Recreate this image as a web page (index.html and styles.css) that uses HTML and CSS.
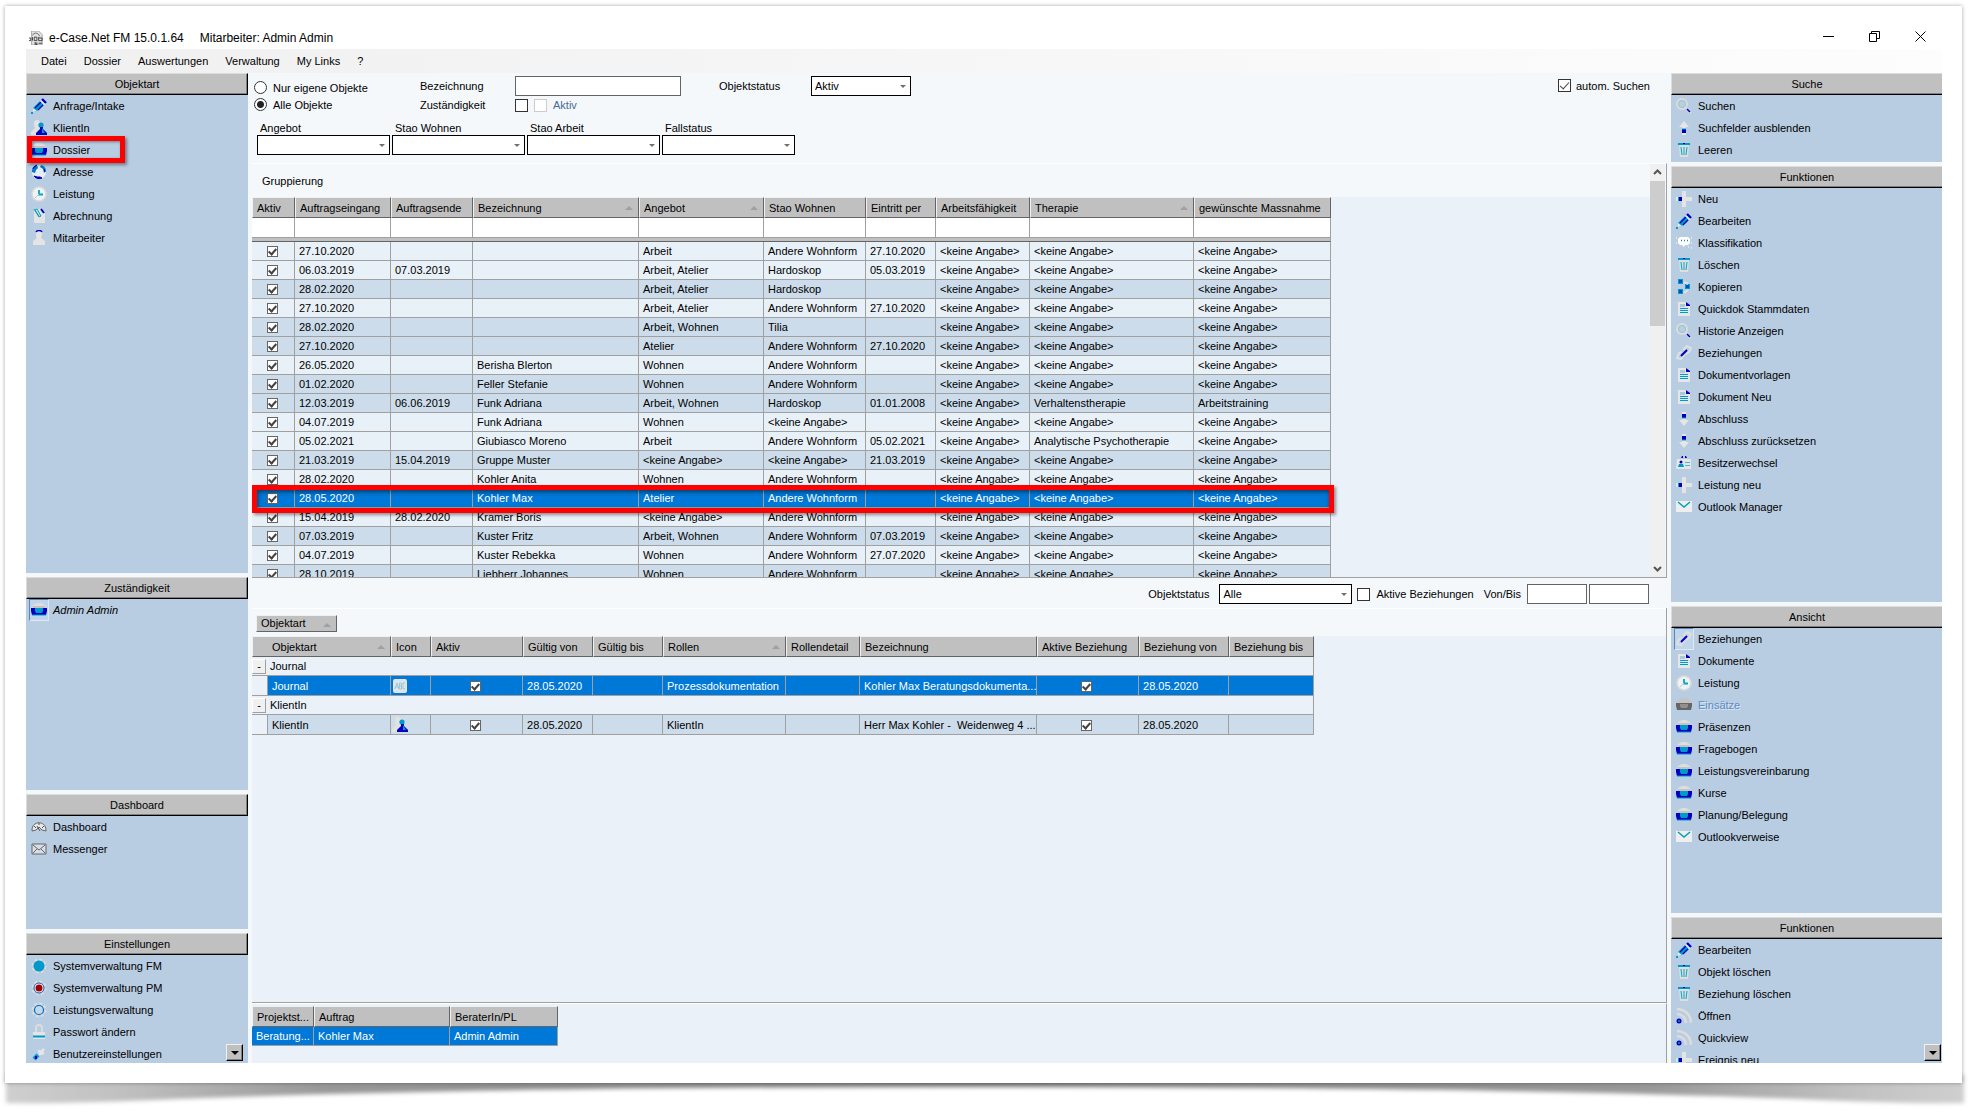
FILE: index.html
```html
<!DOCTYPE html>
<html lang="de">
<head>
    <meta charset="UTF-8">
    <meta name="viewport" content="width=device-width, initial-scale=1.0">
    <title>e-Case.Net FM 15.0.1.64</title>
    <link rel="stylesheet" href="styles.css">
</head>
<body>
    <!-- Icon set -->
    <svg class="sprite" aria-hidden="true">
        <symbol id="i-pencil" viewBox="0 0 16 16">
            <path d="M2 10 9 3l4 4-7 6-4 1z" fill="#0099cc"/>
            <path d="M4 10l6-6M7 12l5-5" stroke="#0000b8" stroke-width="1.2"/>
            <path d="M9 3l2-1 4 4-2 1z" fill="#f0f0f0"/>
            <path d="M11 1l4 4" stroke="#0000c0" stroke-width="2.4"/>
            <path d="M2 10l4 3-4 1z" fill="#e8e8e8"/>
            <path d="M0 14h2v2H0z" fill="#0099cc"/>
        </symbol>
        <symbol id="i-client" viewBox="0 0 16 16">
            <path d="M3 3c0-4 6-4 6 0 0 2-1 3-1 4l1 2-1 6H0v-3l4-4C3 6 3 5 3 3z" fill="#e2e2e2"/>
            <circle cx="10" cy="5" r="2.6" fill="#0099cc"/>
            <path d="M9 7h3v2l4 4v2H5v-2l4-4z" fill="#0000c0"/>
            <path d="M11 8l3 5h-3z" fill="#0099cc"/>
        </symbol>
        <symbol id="i-tray" viewBox="0 0 16 16">
            <path d="M2 3l4-2h4l4 2 1 4H1z" fill="#dedede"/>
            <path d="M2 5h12" stroke="#aaa"/>
            <path d="M0 6h16v3l-1 4H1L0 9z" fill="#0000c0"/>
            <path d="M4 6h8v3l-1 2H5L4 9z" fill="#0099cc"/>
            <path d="M1 13h14" stroke="#0099cc"/>
        </symbol>
        <symbol id="i-tray-off" viewBox="0 0 16 16">
            <path d="M2 3l4-2h4l4 2 1 4H1z" fill="#c4c4c4"/>
            <path d="M0 6h16v3l-1 4H1L0 9z" fill="#666"/>
            <path d="M4 7h8v2l-1 2H5L4 9z" fill="#909090"/>
        </symbol>
        <symbol id="i-globe" viewBox="0 0 16 16">
            <circle cx="8" cy="8" r="7" fill="#e8eef4"/>
            <path d="M6 1C2 2 1 5 1 8l3 1 1-3 2-2zM10 1c4 1 5 4 5 6l-2 2-1-4-3-2z" fill="#0077c8"/>
            <path d="M6 1C4 2 2 3 2 5M13 5l1 3M3 12c2 3 6 3 8 2l-2-1H6z" stroke="#0000b0" fill="#0000b0"/>
        </symbol>
        <symbol id="i-clock" viewBox="0 0 16 16">
            <circle cx="8" cy="8" r="7" fill="#f2f2f2" stroke="#d8d8d8" stroke-width="2" stroke-dasharray="2 1"/>
            <path d="M8 4v4.500h4" stroke="#00a8c0" stroke-width="1.800" fill="none"/>
            <path d="M8 8l-4 4" stroke="#b8cce4"/>
        </symbol>
        <symbol id="i-clip" viewBox="0 0 16 16">
            <path d="M3 1h8l3 3v11H3z" fill="#e4e4e4"/>
            <path d="M10 1l3 4" stroke="#0000c0" stroke-width="2"/>
            <path d="M3 1l5 8 2-1-4-7-2 1 4 6" stroke="#00a0c0" fill="none"/>
        </symbol>
        <symbol id="i-staff" viewBox="0 0 16 16">
            <path d="M5 4c0-5 6-5 6 0 0 2-1 3-1 4l4 3v4H2v-4l4-3C5 7 5 6 5 4z" fill="#e4e4e4"/>
            <path d="M5 2c1-2 5-2 6 0" stroke="#0000c0" stroke-width="1.500" fill="none"/>
        </symbol>
        <symbol id="i-search" viewBox="0 0 16 16">
            <circle cx="6" cy="6" r="5" fill="none" stroke="#dcdcdc" stroke-width="2"/>
            <circle cx="6" cy="6" r="3.500" fill="#b8d0e4" stroke="#98c8cc"/>
            <path d="M10 10l5 5" stroke="#dcdcdc" stroke-width="2.500"/>
            <path d="M11 11l3 3" stroke="#0000c0" stroke-width="1.600"/>
        </symbol>
        <symbol id="i-up" viewBox="0 0 16 16">
            <path d="M8 1l5 6h-3v8H6V7H3z" fill="#e6e6e6"/>
            <path d="M6 9h4v4H6z" fill="#0000b8"/>
            <path d="M6 9h4" stroke="#0099cc"/>
        </symbol>
        <symbol id="i-down" viewBox="0 0 16 16">
            <path d="M6 1h4v8h3l-5 6-5-6h3z" fill="#e6e6e6"/>
            <path d="M6 3h4v4H6z" fill="#0000b8"/>
            <path d="M6 7h4" stroke="#0099cc"/>
        </symbol>
        <symbol id="i-trash" viewBox="0 0 16 16">
            <path d="M3 3h10l-1 12H4z" fill="#dedede"/>
            <path d="M2 2h12" stroke="#0099cc" stroke-width="2"/>
            <path d="M7 1.500h2" stroke="#0000b8"/>
            <path d="M5 5l1 8M8 5v8M11 5l-1 8" stroke="#00a8c8"/>
        </symbol>
        <symbol id="i-plus" viewBox="0 0 16 16">
            <path d="M6 0h4v6h6v4h-6v6H6v-6H0V6h6z" fill="#e4e4e4"/>
            <path d="M2 6h4v4H2z" fill="#0000b8"/>
            <path d="M2.500 6v4" stroke="#0099cc"/>
        </symbol>
        <symbol id="i-cloud" viewBox="0 0 16 16">
            <path d="M4 2h8l2 2v4l-2 2H9l-1 2-2-2H4L2 8V4z" fill="#fff"/>
            <path d="M5 5.500h1M8 5.500h1M11 5.500h1" stroke="#008cb8" stroke-width="1.500"/>
            <path d="M0 3h1M0 8h1M15 3h1M15 8h1M12 12h1M15 13h1" stroke="#fff"/>
        </symbol>
        <symbol id="i-copy" viewBox="0 0 16 16">
            <path d="M2 0h5v5H2zM9 5h5v5H9zM2 10h5v5H2z" fill="#0099cc"/>
            <path d="M3 1h3v3H3zM10 6h3v3h-3zM3 11h3v3H3z" fill="#0050b8"/>
            <path d="M8 3l4 2M8 14l4-3" stroke="#e0e0e0" stroke-width="2"/>
        </symbol>
        <symbol id="i-doc" viewBox="0 0 16 16">
            <path d="M2 1h8l4 4v10H2z" fill="#e6e6e6"/>
            <path d="M4 3h5v3H4z" fill="#a8c8e4"/>
            <path d="M10 1l4 3v1h-4z" fill="#0000b8"/>
            <path d="M4 7.500h8M4 9.500h8M4 11.500h8" stroke="#0099cc"/>
        </symbol>
        <symbol id="i-link" viewBox="0 0 16 16">
            <path d="M7 5l4-4 4 2-2 4-3 2M9 9l-4 5-4-1 2-5 3-1" stroke="#e0e0e0" stroke-width="2" fill="none"/>
            <path d="M5 11l6-6" stroke="#0000c0" stroke-width="2"/>
        </symbol>
        <symbol id="i-card" viewBox="0 0 16 16">
            <path d="M1 4h14v10H0z" fill="#e6e6e6"/>
            <path d="M5 3l1-2h1v2h2V1h1l1 2z" fill="#0000b8"/>
            <circle cx="5" cy="7" r="1.500" fill="#0000b8"/>
            <path d="M2 12l1-3h4l1 3z" fill="#0099cc"/>
            <path d="M9 7.500h5M9 10.500h5" stroke="#48b8cc"/>
        </symbol>
        <symbol id="i-mail" viewBox="0 0 16 16">
            <path d="M0 2h16v11H0z" fill="#eee"/>
            <path d="M2 3l6 5 6-5" stroke="#00a0b8" stroke-width="1.500" fill="none"/>
        </symbol>
        <symbol id="i-gauge" viewBox="0 0 16 16">
            <path d="M1 12C0 1 16 1 15 12l-4-1-3-3-3 3z" fill="#e8e8e8" stroke="#666"/>
            <path d="M3 7l2 2M8 4v2M13 7l-2 2M6 7l3 5" stroke="#555"/>
        </symbol>
        <symbol id="i-envelope" viewBox="0 0 16 16">
            <path d="M1 3h14v10H1z" fill="#d8dee6" stroke="#666"/>
            <path d="M2 4l6 5 6-5M2 12l4-4M14 12l-4-4" stroke="#666" fill="none"/>
        </symbol>
        <symbol id="i-gear-blue" viewBox="0 0 16 16">
            <circle cx="8" cy="8" r="6.500" fill="none" stroke="#dcdcdc" stroke-width="2" stroke-dasharray="3 2"/>
            <circle cx="8" cy="8" r="5.500" fill="#0099cc"/>
        </symbol>
        <symbol id="i-gear-red" viewBox="0 0 16 16">
            <circle cx="8" cy="8" r="6.500" fill="none" stroke="#dcdcdc" stroke-width="2" stroke-dasharray="3 2"/>
            <circle cx="8" cy="8" r="5" fill="#fff" stroke="#1858a8"/>
            <circle cx="8" cy="8" r="3.500" fill="#a00000"/>
        </symbol>
        <symbol id="i-gear" viewBox="0 0 16 16">
            <circle cx="8" cy="8" r="6.500" fill="none" stroke="#dcdcdc" stroke-width="2" stroke-dasharray="3 2"/>
            <circle cx="8" cy="8" r="4.500" fill="#c4d8ea" stroke="#0070c0" stroke-width="1.200"/>
        </symbol>
        <symbol id="i-lock" viewBox="0 0 16 16">
            <path d="M5 8V4c0-4 6-4 6 0v4" stroke="#dcdcdc" stroke-width="2" fill="none"/>
            <path d="M2 8h12v7H2z" fill="#e4e4e4"/>
            <path d="M2 12.500h12" stroke="#0099cc" stroke-width="2"/>
        </symbol>
        <symbol id="i-wrench" viewBox="0 0 16 16">
            <path d="M8 8l5-5M8 4l1 4 4-1" stroke="#e6e6e6" stroke-width="2.500" fill="none"/>
            <path d="M3 13l4-4" stroke="#0099cc" stroke-width="4"/>
            <path d="M4 11.500h2" stroke="#0000b8" stroke-width="3"/>
        </symbol>
        <symbol id="i-feed" viewBox="0 0 16 16">
            <path d="M1 1c8 0 14 6 14 14M1 6c5 0 9 4 9 9" stroke="#dcdcdc" stroke-width="2.500" fill="none"/>
            <circle cx="3" cy="13" r="2.500" fill="#0000c0"/>
            <circle cx="3" cy="13" r="1" fill="#0099cc"/>
        </symbol>
        <symbol id="i-text" viewBox="0 0 16 16">
            <rect x="1" y="1" width="14" height="14" rx="2" fill="#dfe5ea"/>
            <path d="M3 11l2-6 2 6M3 9h3M7.500 5v6h2V5zM7.500 8h2M13 5h-2v6h2" stroke="#9cc8dc" fill="none"/>
        </symbol>
        <symbol id="i-app" viewBox="0 0 16 16">
            <path d="M3 0h8l4 4v12H3z" fill="#e4e4e4" stroke="#999"/>
            <path d="M4 5c2-4 7-3 8 1" stroke="#555" fill="none"/>
            <path d="M0 8h2v3H0M4 7v4M6 7h3v4H6zM11 7v4h4V8h-4M7 13v3M7 13l2 3v-3M11 14h4" stroke="#333" fill="none"/>
        </symbol>
    </svg>

    <div class="sheet">
        <!-- Title bar -->
        <header class="titlebar">
            <svg class="app-icon"><use href="#i-app"/></svg>
            <span class="app-name">e-Case.Net FM 15.0.1.64</span>
            <span>Mitarbeiter: Admin Admin</span>
            <div class="window-buttons">
                <button aria-label="Minimieren"><svg viewBox="0 0 11 11"><path d="M0 5.500h11" stroke="#000"/></svg></button>
                <button aria-label="Wiederherstellen"><svg viewBox="0 0 11 11"><path d="M.5 2.500h7v8h-7zM2.500 2V.5h8v7H8" stroke="#000" fill="none"/></svg></button>
                <button aria-label="Schliessen"><svg viewBox="0 0 11 11"><path d="M.5.500l10 10M10.500.500l-10 10" stroke="#000"/></svg></button>
            </div>
        </header>

        <nav class="menubar">
            <button>Datei</button>
            <button>Dossier</button>
            <button>Auswertungen</button>
            <button>Verwaltung</button>
            <button>My Links</button>
            <button>?</button>
        </nav>

        <div class="workspace">
            <!-- Navigation -->
            <aside class="sidebar sidebar-left">
                <section class="panel panel-objektart">
                    <h2>Objektart</h2>
                    <a href="#"><svg><use href="#i-pencil"/></svg>Anfrage/Intake</a>
                    <a href="#"><svg><use href="#i-client"/></svg>KlientIn</a>
                    <a href="#" class="marked"><svg><use href="#i-tray"/></svg>Dossier</a>
                    <a href="#"><svg><use href="#i-globe"/></svg>Adresse</a>
                    <a href="#"><svg><use href="#i-clock"/></svg>Leistung</a>
                    <a href="#"><svg><use href="#i-clip"/></svg>Abrechnung</a>
                    <a href="#"><svg><use href="#i-staff"/></svg>Mitarbeiter</a>
                </section>
                <section class="panel panel-zustaendigkeit">
                    <h2>Zuständigkeit</h2>
                    <a href="#" class="pressed own"><svg><use href="#i-tray"/></svg>Admin Admin</a>
                </section>
                <section class="panel panel-dashboard">
                    <h2>Dashboard</h2>
                    <a href="#"><svg><use href="#i-gauge"/></svg>Dashboard</a>
                    <a href="#"><svg><use href="#i-envelope"/></svg>Messenger</a>
                </section>
                <section class="panel panel-einstellungen">
                    <h2>Einstellungen</h2>
                    <a href="#"><svg><use href="#i-gear-blue"/></svg>Systemverwaltung FM</a>
                    <a href="#"><svg><use href="#i-gear-red"/></svg>Systemverwaltung PM</a>
                    <a href="#"><svg><use href="#i-gear"/></svg>Leistungsverwaltung</a>
                    <a href="#"><svg><use href="#i-lock"/></svg>Passwort ändern</a>
                    <a href="#"><svg><use href="#i-wrench"/></svg>Benutzereinstellungen</a>
                    <button class="scroll-more" aria-label="Weiter"></button>
                </section>
            </aside>

            <main>
                <!-- Search fields -->
                <form class="search">
                    <div class="search-row">
                        <div class="scope">
                            <label><input type="radio" name="scope">Nur eigene Objekte</label>
                            <label><input type="radio" name="scope" checked>Alle Objekte</label>
                        </div>
                        <div class="fields">
                            <label for="bezeichnung">Bezeichnung</label>
                            <input type="text" id="bezeichnung">
                            <label for="zustaendig">Zuständigkeit</label>
                            <div class="checks">
                                <input type="checkbox" id="zustaendig">
                                <label class="off"><input type="checkbox" disabled>Aktiv</label>
                            </div>
                        </div>
                        <div class="status">
                            <label for="status">Objektstatus</label>
                            <span class="select"><select id="status"><option>Aktiv</option></select></span>
                        </div>
                        <label class="auto"><input type="checkbox" checked>autom. Suchen</label>
                    </div>
                    <div class="combos">
                        <div><label for="angebot">Angebot</label><span class="select"><select id="angebot"><option></option></select></span></div>
                        <div><label for="wohnen">Stao Wohnen</label><span class="select"><select id="wohnen"><option></option></select></span></div>
                        <div><label for="arbeit">Stao Arbeit</label><span class="select"><select id="arbeit"><option></option></select></span></div>
                        <div><label for="fall">Fallstatus</label><span class="select"><select id="fall"><option></option></select></span></div>
                    </div>
                </form>

                <!-- Dossier list -->
                <section class="list">
                    <div class="list-body">
                        <div class="groupbar">Gruppierung</div>
                        <table class="grid dossiers">
                            <colgroup>
                                <col class="w43"><col class="w96"><col class="w82"><col class="w166"><col class="w125">
                                <col class="w102"><col class="w70"><col class="w94"><col class="w164"><col class="w137">
                            </colgroup>
                            <thead>
                                <tr>
                                    <th>Aktiv</th>
                                    <th>Auftragseingang</th>
                                    <th>Auftragsende</th>
                                    <th class="sort">Bezeichnung</th>
                                    <th class="sort">Angebot</th>
                                    <th>Stao Wohnen</th>
                                    <th>Eintritt per</th>
                                    <th>Arbeitsfähigkeit</th>
                                    <th class="sort">Therapie</th>
                                    <th>gewünschte Massnahme</th>
                                </tr>
                                <tr class="filter" id="filter-row"></tr>
                                <tr class="rule"><td colspan="10"></td></tr>
                            </thead>
                            <tbody id="dossier-rows"></tbody>
                        </table>
                    </div>
                    <div class="scrollbar">
                        <svg viewBox="0 0 15 17"><path d="M4 10l3.500-3.500L11 10" stroke="#555" stroke-width="2" fill="none"/></svg>
                        <div class="thumb"></div>
                        <svg viewBox="0 0 15 17"><path d="M4 7l3.500 3.500L11 7" stroke="#555" stroke-width="2" fill="none"/></svg>
                    </div>
                </section>

                <form class="relation-filter">
                    <label for="rel-status">Objektstatus</label>
                    <span class="select"><select id="rel-status"><option>Alle</option></select></span>
                    <label class="active-only"><input type="checkbox">Aktive Beziehungen</label>
                    <label for="von">Von/Bis</label>
                    <input type="text" id="von">
                    <input type="text" id="bis" aria-label="Bis">
                </form>

                <!-- Relations -->
                <section class="relations">
                    <div class="groupbar"><button class="group-key">Objektart</button></div>
                    <table class="grid relation-table">
                        <colgroup>
                            <col class="w16"><col class="w123"><col class="w40"><col class="w92"><col class="w70"><col class="w70">
                            <col class="w123"><col class="w74"><col class="w177"><col class="w102"><col class="w90"><col class="w85">
                        </colgroup>
                        <thead>
                            <tr>
                                <th colspan="2" class="sort first">Objektart</th>
                                <th>Icon</th>
                                <th>Aktiv</th>
                                <th>Gültig von</th>
                                <th>Gültig bis</th>
                                <th class="sort">Rollen</th>
                                <th>Rollendetail</th>
                                <th>Bezeichnung</th>
                                <th>Aktive Beziehung</th>
                                <th>Beziehung von</th>
                                <th>Beziehung bis</th>
                            </tr>
                        </thead>
                        <tbody>
                            <tr class="group"><td colspan="12"><button aria-label="Zuklappen">-</button>Journal</td></tr>
                            <tr class="selected">
                                <td class="indent"></td>
                                <td>Journal</td>
                                <td><svg><use href="#i-text"/></svg></td>
                                <td class="tick"><input type="checkbox" checked aria-label="Aktiv"></td>
                                <td>28.05.2020</td>
                                <td></td>
                                <td>Prozessdokumentation</td>
                                <td></td>
                                <td>Kohler Max Beratungsdokumenta...</td>
                                <td class="tick"><input type="checkbox" checked aria-label="Aktive Beziehung"></td>
                                <td>28.05.2020</td>
                                <td></td>
                            </tr>
                            <tr class="group"><td colspan="12"><button aria-label="Zuklappen">-</button>KlientIn</td></tr>
                            <tr class="dark">
                                <td class="indent"></td>
                                <td>KlientIn</td>
                                <td><svg><use href="#i-client"/></svg></td>
                                <td class="tick"><input type="checkbox" checked aria-label="Aktiv"></td>
                                <td>28.05.2020</td>
                                <td></td>
                                <td>KlientIn</td>
                                <td></td>
                                <td>Herr Max Kohler - &nbsp;Weidenweg 4 ...</td>
                                <td class="tick"><input type="checkbox" checked aria-label="Aktive Beziehung"></td>
                                <td>28.05.2020</td>
                                <td></td>
                            </tr>
                        </tbody>
                    </table>
                </section>

                <!-- Project positions -->
                <section class="projects">
                    <table class="grid project-table">
                        <colgroup><col class="w62"><col class="w136"><col class="w108"></colgroup>
                        <thead>
                            <tr><th>Projektst...</th><th>Auftrag</th><th>BeraterIn/PL</th></tr>
                        </thead>
                        <tbody>
                            <tr class="selected"><td>Beratung...</td><td>Kohler Max</td><td>Admin Admin</td></tr>
                        </tbody>
                    </table>
                </section>
            </main>

            <!-- Actions -->
            <aside class="sidebar sidebar-right">
                <section class="panel panel-suche">
                    <h2>Suche</h2>
                    <a href="#"><svg><use href="#i-search"/></svg>Suchen</a>
                    <a href="#"><svg><use href="#i-up"/></svg>Suchfelder ausblenden</a>
                    <a href="#"><svg><use href="#i-trash"/></svg>Leeren</a>
                </section>
                <section class="panel panel-funktionen">
                    <h2>Funktionen</h2>
                    <a href="#"><svg><use href="#i-plus"/></svg>Neu</a>
                    <a href="#"><svg><use href="#i-pencil"/></svg>Bearbeiten</a>
                    <a href="#"><svg><use href="#i-cloud"/></svg>Klassifikation</a>
                    <a href="#"><svg><use href="#i-trash"/></svg>Löschen</a>
                    <a href="#"><svg><use href="#i-copy"/></svg>Kopieren</a>
                    <a href="#"><svg><use href="#i-doc"/></svg>Quickdok Stammdaten</a>
                    <a href="#"><svg><use href="#i-search"/></svg>Historie Anzeigen</a>
                    <a href="#"><svg><use href="#i-link"/></svg>Beziehungen</a>
                    <a href="#"><svg><use href="#i-doc"/></svg>Dokumentvorlagen</a>
                    <a href="#"><svg><use href="#i-doc"/></svg>Dokument Neu</a>
                    <a href="#"><svg><use href="#i-down"/></svg>Abschluss</a>
                    <a href="#"><svg><use href="#i-down"/></svg>Abschluss zurücksetzen</a>
                    <a href="#"><svg><use href="#i-card"/></svg>Besitzerwechsel</a>
                    <a href="#"><svg><use href="#i-plus"/></svg>Leistung neu</a>
                    <a href="#"><svg><use href="#i-mail"/></svg>Outlook Manager</a>
                </section>
                <section class="panel panel-ansicht">
                    <h2>Ansicht</h2>
                    <a href="#" class="pressed"><svg><use href="#i-link"/></svg>Beziehungen</a>
                    <a href="#"><svg><use href="#i-doc"/></svg>Dokumente</a>
                    <a href="#"><svg><use href="#i-clock"/></svg>Leistung</a>
                    <a href="#" class="disabled"><svg><use href="#i-tray-off"/></svg>Einsätze</a>
                    <a href="#"><svg><use href="#i-tray"/></svg>Präsenzen</a>
                    <a href="#"><svg><use href="#i-tray"/></svg>Fragebogen</a>
                    <a href="#"><svg><use href="#i-tray"/></svg>Leistungsvereinbarung</a>
                    <a href="#"><svg><use href="#i-tray"/></svg>Kurse</a>
                    <a href="#"><svg><use href="#i-tray"/></svg>Planung/Belegung</a>
                    <a href="#"><svg><use href="#i-mail"/></svg>Outlookverweise</a>
                </section>
                <section class="panel panel-objekt">
                    <h2>Funktionen</h2>
                    <a href="#"><svg><use href="#i-pencil"/></svg>Bearbeiten</a>
                    <a href="#"><svg><use href="#i-trash"/></svg>Objekt löschen</a>
                    <a href="#"><svg><use href="#i-trash"/></svg>Beziehung löschen</a>
                    <a href="#"><svg><use href="#i-feed"/></svg>Öffnen</a>
                    <a href="#"><svg><use href="#i-feed"/></svg>Quickview</a>
                    <a href="#"><svg><use href="#i-plus"/></svg>Ereignis neu</a>
                    <button class="scroll-more" aria-label="Weiter"></button>
                </section>
            </aside>
        </div>
    </div>

    <svg class="sheet-shadow" viewBox="0 0 1976 29" preserveAspectRatio="none" aria-hidden="true">
        <defs>
            <linearGradient id="shade">
                <stop offset="0" stop-color="#cfcfcf"/>
                <stop offset=".06" stop-color="#c0c0c0"/>
                <stop offset=".16" stop-color="#999"/>
                <stop offset=".5" stop-color="#7c7c7c"/>
                <stop offset=".84" stop-color="#999"/>
                <stop offset=".94" stop-color="#c0c0c0"/>
                <stop offset="1" stop-color="#cfcfcf"/>
            </linearGradient>
            <filter id="soft" x="-1%" y="-50%" width="102%" height="200%"><feGaussianBlur stdDeviation="2"/></filter>
        </defs>
        <path d="M6-8H1964V20Q1900 21 1800 16Q1500 4 988 4T176 16Q70 21 6 20z" fill="url(#shade)" filter="url(#soft)"/>
    </svg>

    <script>
        const keine = '&lt;keine Angabe&gt;';
        const andere = 'Andere Wohnform';

        // class, Eingang, Ende, Bezeichnung, Angebot, Wohnen, Eintritt, Therapie, Massnahme
        const dossiers = [
            ['', '27.10.2020', '', '', 'Arbeit', andere, '27.10.2020'],
            ['', '06.03.2019', '07.03.2019', '', 'Arbeit, Atelier', 'Hardoskop', '05.03.2019'],
            ['dark', '28.02.2020', '', '', 'Arbeit, Atelier', 'Hardoskop', ''],
            ['', '27.10.2020', '', '', 'Arbeit, Atelier', andere, '27.10.2020'],
            ['dark', '28.02.2020', '', '', 'Arbeit, Wohnen', 'Tilia', ''],
            ['dark', '27.10.2020', '', '', 'Atelier', andere, '27.10.2020'],
            ['', '26.05.2020', '', 'Berisha Blerton', 'Wohnen', andere, ''],
            ['dark', '01.02.2020', '', 'Feller Stefanie', 'Wohnen', andere, ''],
            ['dark', '12.03.2019', '06.06.2019', 'Funk Adriana', 'Arbeit, Wohnen', 'Hardoskop', '01.01.2008', 'Verhaltenstherapie', 'Arbeitstraining'],
            ['', '04.07.2019', '', 'Funk Adriana', 'Wohnen', keine, ''],
            ['', '05.02.2021', '', 'Giubiasco Moreno', 'Arbeit', andere, '05.02.2021', 'Analytische Psychotherapie'],
            ['dark', '21.03.2019', '15.04.2019', 'Gruppe Muster', keine, keine, '21.03.2019'],
            ['', '28.02.2020', '', 'Kohler Anita', 'Wohnen', andere, ''],
            ['selected marked', '28.05.2020', '', 'Kohler Max', 'Atelier', andere, ''],
            ['', '15.04.2019', '28.02.2020', 'Kramer Boris', keine, andere, ''],
            ['dark', '07.03.2019', '', 'Kuster Fritz', 'Arbeit, Wohnen', andere, '07.03.2019'],
            ['', '04.07.2019', '', 'Kuster Rebekka', 'Wohnen', andere, '27.07.2020'],
            ['dark', '28.10.2019', '', 'Liebherr Johannes', 'Wohnen', andere, '']
        ];

        document.getElementById('filter-row').innerHTML =
            '<td><input type="text" aria-label="Filter"></td>'.repeat(10);

        document.getElementById('dossier-rows').innerHTML = dossiers
            .map(([cls, von, bis, name, angebot, wohnen, eintritt, therapie = keine, massnahme = keine]) => `
                <tr class="${cls}">
                    <td class="tick"><input type="checkbox" checked aria-label="Aktiv"></td>
                    <td>${von}</td>
                    <td>${bis}</td>
                    <td>${name}</td>
                    <td>${angebot}</td>
                    <td>${wohnen}</td>
                    <td>${eintritt}</td>
                    <td>${keine}</td>
                    <td>${therapie}</td>
                    <td>${massnahme}</td>
                </tr>
            `)
            .join('');
    </script>
</body>
</html>
```

FILE: styles.css
```css
*, *::before, *::after {
    box-sizing: border-box;
}
body {
    display: flex;
    flex-direction: column;
    height: 100vh;
    margin: 0;
    overflow: hidden;
    background-color: #fff;
    color: #000;
    font-family: "Liberation Sans", Arial, sans-serif;
    font-size: 11px;
    line-height: 16px;
}
button, input, select {
    font: inherit;
    color: inherit;
    margin: 0;
}
.sprite {
    position: absolute;
    width: 0;
    height: 0;
}
.sheet {
    position: relative;
    z-index: 1;
    flex: 1;
    min-height: 0;
    display: flex;
    flex-direction: column;
    margin: 6px 14px 0 5px;
    padding: 21px 20px 20px 21px;
    background-color: #fff;
    box-shadow: 0 0 4px rgba(0, 0, 0, 0.35);
}
.sheet-shadow {
    flex: none;
    display: block;
    width: 100%;
    height: 29px;
    overflow: visible;
}

/* title and menu */
.titlebar {
    display: flex;
    align-items: center;
    flex: none;
    height: 22px;
    padding-left: 3px;
    font-size: 12px;
}
.app-icon {
    width: 14px;
    height: 14px;
    margin-right: 6px;
}
.app-name {
    margin-right: 16px;
}
.window-buttons {
    display: flex;
    gap: 23px;
    align-self: flex-start;
    margin-left: auto;
    padding-right: 10px;
}
.window-buttons button {
    display: flex;
    align-items: center;
    justify-content: center;
    width: 23px;
    height: 18px;
    padding: 0;
    border: none;
    background: none;
}
.window-buttons svg {
    width: 11px;
    height: 11px;
}
.menubar {
    display: flex;
    flex: none;
    height: 24px;
    padding-left: 6px;
    background: linear-gradient(90deg, #f0f0f0, #fdfdfd);
}
.menubar button {
    padding: 0 8px 0 9px;
    border: none;
    background: none;
}
.workspace {
    flex: 1;
    min-height: 0;
    display: flex;
    background-color: #f4f8fb;
}

/* side panels */
.sidebar {
    flex: none;
    display: flex;
    flex-direction: column;
    gap: 4px;
}
.sidebar-left {
    width: 222px;
}
.sidebar-right {
    width: 271px;
}
.panel {
    position: relative;
    min-height: 0;
    overflow: hidden;
    background-color: #b8cce2;
}
.panel-objektart { flex: 500 1 0; }
.panel-zustaendigkeit { flex: 213 1 0; }
.panel-dashboard { flex: 135 1 0; }
.panel-einstellungen { flex: 130 1 0; }
.panel-suche { flex: none; padding-bottom: 1px; }
.panel-funktionen { flex: 436 1 0; }
.panel-ansicht { flex: 307 1 0; }
.panel-objekt { flex: 146 1 0; }
.panel h2 {
    height: 22px;
    margin: 0;
    padding-top: 2px;
    border: 1px solid #000;
    border-top-color: #dcdcdc;
    border-left-color: #dcdcdc;
    box-shadow: inset -1px -1px #808080;
    background-color: #c0c0c0;
    font-size: 11px;
    font-weight: normal;
    text-align: center;
}
.sidebar-right h2 {
    border-right: none;
    box-shadow: inset 0 -1px #808080;
}
.panel a {
    position: relative;
    display: flex;
    align-items: center;
    gap: 6px;
    height: 22px;
    padding-left: 5px;
    color: #000;
    text-decoration: none;
}
.panel a svg {
    flex: none;
    width: 16px;
    height: 16px;
}
.panel a.pressed svg {
    width: 20px;
    height: 22px;
    margin: 0 -2px;
    padding: 2px 1px;
    border: 1px solid #dce8f5;
    border-top-color: #5a86b8;
    border-left-color: #5a86b8;
    background-color: #c0d4ea;
}
.panel a.own {
    font-style: italic;
}
.panel a.disabled {
    color: #5b8cc4;
    text-shadow: 1px 1px #dce8f5;
}
.panel a.marked {
    z-index: 1;
}
.panel a.marked::after {
    content: "";
    position: absolute;
    top: -3px;
    left: 1px;
    width: 98px;
    height: 27px;
    border: 5px solid #f00;
    box-shadow: 2px 2px 3px rgba(0, 0, 0, 0.4), inset 1px 1px 3px rgba(0, 0, 0, 0.4);
}
.scroll-more {
    position: absolute;
    right: 5px;
    bottom: 2px;
    width: 17px;
    height: 17px;
    padding: 0;
    border: 1px solid #000;
    border-top-color: #f0f0f0;
    border-left-color: #f0f0f0;
    box-shadow: inset -1px -1px #808080;
    background-color: #c0c0c0;
}
.sidebar-right .scroll-more {
    right: 1px;
}
.scroll-more::after {
    content: "";
    display: block;
    width: 0;
    margin: 0 auto;
    border: 4px solid transparent;
    border-top-color: #000;
    border-bottom: none;
}

/* form controls */
input[type="text"] {
    height: 20px;
    padding: 0 3px;
    border: 1px solid #646464;
    background-color: #fff;
}
input[type="checkbox"] {
    appearance: none;
    flex: none;
    position: relative;
    width: 13px;
    height: 13px;
    border: 1px solid #333;
    background-color: #fff;
}
input[type="checkbox"]:disabled {
    border-color: #ccc;
}
input[type="checkbox"]:checked::after {
    content: "";
    position: absolute;
    top: 0;
    left: 3px;
    width: 5px;
    height: 9px;
    border: solid #444;
    border-width: 0 1px 1px 0;
    transform: rotate(42deg);
}
input[type="radio"] {
    appearance: none;
    width: 13px;
    height: 13px;
    border: 1px solid #333;
    border-radius: 50%;
    background-color: #fff;
}
input[type="radio"]:checked {
    background: radial-gradient(circle, #222 3px, #fff 4px);
}
.select {
    position: relative;
    display: block;
    height: 20px;
}
.select select {
    appearance: none;
    display: block;
    width: 100%;
    height: 20px;
    padding: 0 3px;
    border: 1px solid #000;
    border-radius: 0;
    background-color: #fff;
}
.select::after {
    content: "";
    position: absolute;
    top: 9px;
    right: 5px;
    border: 3px solid transparent;
    border-top-color: #707070;
    border-bottom: none;
}

/* search fields */
main {
    flex: 1;
    min-width: 0;
    display: flex;
    flex-direction: column;
    padding: 0 4px;
}
.search {
    flex: none;
    height: 90px;
    padding-top: 3px;
}
.search-row {
    display: flex;
    height: 44px;
}
.scope {
    width: 168px;
    padding: 3px 0 0 2px;
}
.scope label {
    display: flex;
    align-items: center;
    gap: 6px;
    height: 17px;
}
.fields {
    display: grid;
    grid-template-columns: 95px 166px;
    grid-template-rows: 20px 18px;
    align-items: center;
}
.checks, .checks label {
    display: flex;
    align-items: center;
    gap: 6px;
}
.off {
    color: #4a6a94;
}
.status {
    display: grid;
    grid-template-columns: 92px 100px;
    grid-template-rows: 20px;
    align-items: center;
    margin-left: 38px;
}
.auto {
    display: flex;
    align-items: center;
    gap: 5px;
    height: 19px;
    margin-left: auto;
    padding-right: 17px;
}
.combos {
    display: flex;
    gap: 2px;
    padding-left: 5px;
}
.combos div {
    width: 133px;
}
.combos label {
    display: block;
    height: 15px;
    padding-left: 3px;
}

/* grids */
.list {
    flex: 416 1 0;
    min-height: 0;
    display: flex;
    overflow: hidden;
    border: 1px solid #fff;
    border-width: 1px 0 0;
    border-right: 1px solid #a0a0a0;
    border-bottom: 1px solid #a0a0a0;
}
.list-body {
    flex: 1;
    min-width: 0;
    overflow: hidden;
    background-color: #eaf1f9;
}
.groupbar {
    height: 33px;
    padding: 9px 10px;
    background-color: #f4f8fb;
}
.scrollbar {
    display: flex;
    flex-direction: column;
    width: 15px;
    margin-right: 1px;
    background-color: #f0f0f0;
}
.scrollbar svg {
    width: 15px;
    height: 17px;
}
.scrollbar .thumb {
    height: 35%;
    margin-bottom: auto;
    background-color: #cdcdcd;
}
.grid {
    position: relative;
    table-layout: fixed;
    border-collapse: separate;
    border-spacing: 0;
}
.dossiers { width: 1079px; }
.relation-table { width: 1062px; }
.project-table { width: 306px; }
.w16 { width: 16px; }
.w40 { width: 40px; }
.w43 { width: 43px; }
.w62 { width: 62px; }
.w70 { width: 70px; }
.w74 { width: 74px; }
.w82 { width: 82px; }
.w85 { width: 85px; }
.w90 { width: 90px; }
.w92 { width: 92px; }
.w94 { width: 94px; }
.w96 { width: 96px; }
.w102 { width: 102px; }
.w108 { width: 108px; }
.w123 { width: 123px; }
.w125 { width: 125px; }
.w136 { width: 136px; }
.w137 { width: 137px; }
.w164 { width: 164px; }
.w166 { width: 166px; }
.w177 { width: 177px; }
.grid th {
    position: relative;
    height: 21px;
    padding: 1px 0 0 4px;
    border: 1px solid #646464;
    border-top-color: #f0f0f0;
    border-left-color: #f0f0f0;
    background-color: #c0c0c0;
    font-weight: normal;
    text-align: left;
    white-space: nowrap;
}
.grid th.first {
    padding-left: 19px;
}
.grid th.sort::after, .group-key::after {
    content: "";
    position: absolute;
    top: 8px;
    right: 5px;
    border: 4px solid transparent;
    border-bottom-color: #a0a0a0;
    border-top: none;
}
.grid td {
    height: 19px;
    padding: 0 0 0 4px;
    border: solid #a0a0a0;
    border-width: 0 1px 1px 0;
    background-color: #e8f0f8;
    white-space: nowrap;
    overflow: hidden;
}
.grid .filter td {
    height: 20px;
    padding: 0;
    background-color: #fff;
}
.filter input[type="text"] {
    display: block;
    width: 100%;
    height: 19px;
    border: none;
}
.grid .rule td {
    height: 4px;
    padding: 0;
    border-bottom-color: #646464;
    background-color: #c0c0c0;
    line-height: 0;
}
.grid .dark td {
    background-color: #ccdcea;
}
.grid .selected td {
    background-color: #0078d7;
    color: #fff;
}
.grid td.tick {
    padding: 0 2px 0 0;
    text-align: center;
}
.grid .tick input {
    display: block;
    width: 11px;
    height: 11px;
    margin: 0 auto;
    border-color: #666;
}
.grid .tick input::after {
    top: 0;
    left: 2px;
    width: 5px;
    height: 8px;
    border-width: 0 2px 2px 0;
}
.grid tr.marked {
    position: relative;
    z-index: 1;
}
.grid tr.marked::after {
    content: "";
    position: absolute;
    top: -4px;
    left: 0;
    width: 1082px;
    height: 28px;
    border: 5px solid #f00;
    box-shadow: 2px 2px 3px rgba(0, 0, 0, 0.4), inset 1px 2px 4px rgba(0, 0, 0, 0.5);
}

/* relations */
.relation-filter {
    flex: none;
    display: flex;
    align-items: center;
    justify-content: flex-end;
    height: 30px;
    padding: 2px 18px 0 0;
}
.relation-filter .select {
    width: 133px;
    margin: 0 5px 0 10px;
}
.relation-filter .active-only {
    display: flex;
    align-items: center;
    gap: 6px;
    margin-right: 10px;
}
.relation-filter input[type="text"] {
    width: 60px;
    margin-left: 2px;
}
.relation-filter #von {
    margin-left: 6px;
}
.relations {
    flex: 397 1 0;
    min-height: 0;
    overflow: hidden;
    border: solid #a0a0a0;
    border-width: 0 1px 1px 0;
    background-color: #eaf1f9;
}
.relations .groupbar {
    height: 28px;
    padding: 6px 4px;
    border-top: 1px solid #fff;
}
.group-key {
    position: relative;
    display: block;
    width: 81px;
    height: 17px;
    padding: 0 4px;
    border: 1px solid #646464;
    border-top-color: #f0f0f0;
    border-left-color: #f0f0f0;
    background-color: #c0c0c0;
    line-height: 15px;
    text-align: left;
}
.group-key::after {
    top: 7px;
}
.grid .group td {
    padding: 0;
    background-color: #eaf1f9;
}
.group button {
    width: 14px;
    height: 15px;
    margin-right: 4px;
    padding: 0;
    border: 1px solid #a0a0a0;
    border-top-color: #fff;
    border-left-color: #fff;
    background-color: #f0f0f0;
    line-height: 12px;
}
.relation-table tr:not(.group) td {
    height: 20px;
    padding-top: 1px;
}
.grid tr td.indent {
    background-color: #eaf1f9;
}
.grid td svg {
    display: block;
    width: 16px;
    height: 16px;
    margin-left: -3px;
}
.projects {
    flex: 57 1 0;
    min-height: 0;
    overflow: hidden;
    padding-top: 2px;
    border-top: 1px solid #fff;
    border-right: 1px solid #a0a0a0;
    background-color: #eaf1f9;
}
```
